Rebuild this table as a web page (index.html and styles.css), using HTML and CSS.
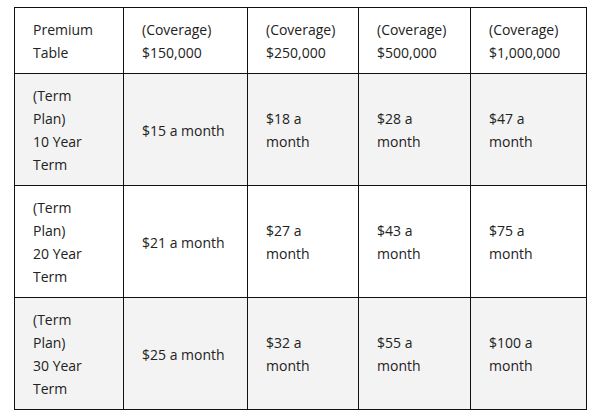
FILE: index.html
```html
<!DOCTYPE html>
<html>
<head>
<meta charset="utf-8">
<link rel="stylesheet" href="styles.css">
</head>
<body>
<div class="wrap">
<table class="premium">
  <colgroup>
    <col class="c1"><col class="c2"><col class="c3"><col class="c4"><col class="c5">
  </colgroup>
  <tbody>
    <tr class="head">
      <td>Premium<br>Table</td>
      <td>(Coverage)<br>$150,000</td>
      <td>(Coverage)<br>$250,000</td>
      <td>(Coverage)<br>$500,000</td>
      <td>(Coverage)<br>$1,000,000</td>
    </tr>
    <tr class="shade">
      <td>(Term<br>Plan)<br>10 Year<br>Term</td>
      <td>$15 a month</td>
      <td>$18 a<br>month</td>
      <td>$28 a<br>month</td>
      <td>$47 a<br>month</td>
    </tr>
    <tr>
      <td>(Term<br>Plan)<br>20 Year<br>Term</td>
      <td>$21 a month</td>
      <td>$27 a<br>month</td>
      <td>$43 a<br>month</td>
      <td>$75 a<br>month</td>
    </tr>
    <tr class="shade">
      <td>(Term<br>Plan)<br>30 Year<br>Term</td>
      <td>$25 a month</td>
      <td>$32 a<br>month</td>
      <td>$55 a<br>month</td>
      <td>$100 a<br>month</td>
    </tr>
  </tbody>
</table>
</div>
</body>
</html>
```
FILE: styles.css
```css
html, body {
  margin: 0;
  padding: 0;
  background: #fff;
}
.wrap {
  padding: 7px 0 0 14px;
}
.premium {
  border-collapse: collapse;
  table-layout: fixed;
  width: 572px;
  font-family: "Open Sans", sans-serif;
  font-size: 14px;
  line-height: 23px;
  color: #222;
}
.c1 { width: 109px; }
.c2 { width: 124px; }
.c3 { width: 111px; }
.c4 { width: 112px; }
.c5 { width: 116px; }
.premium td {
  border: 1px solid #111;
  padding: 10px 18px 9px;
  vertical-align: middle;
  text-align: left;
}
.premium tr.shade td {
  background: #f3f3f3;
}
```
